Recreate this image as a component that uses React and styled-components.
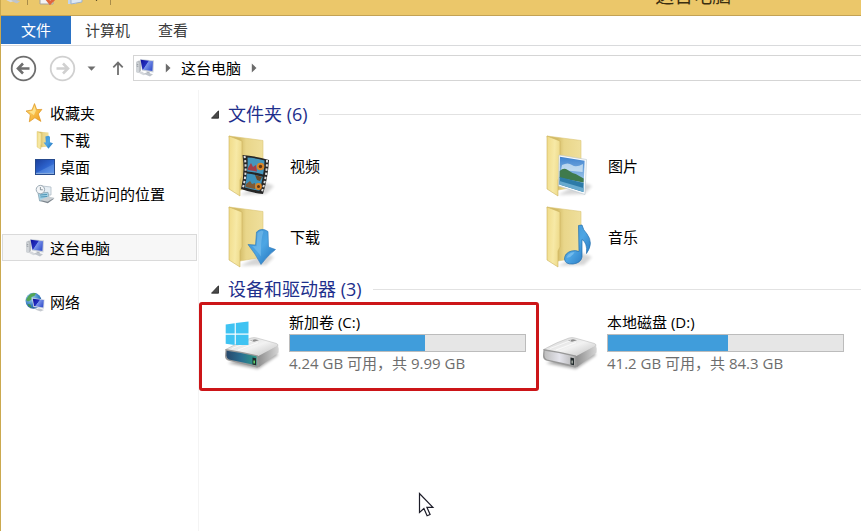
import React, { useState } from "react";
import styled, { createGlobalStyle } from "styled-components";

const GlobalStyle = createGlobalStyle`
  * {
    box-sizing: border-box;
  }
  body {
    margin: 0;
    background: #ffffff;
    font-family: "Open Sans", "Noto Sans CJK SC", sans-serif;
    font-size: 15px;
    line-height: 20px;
    color: #000000;
  }
  button {
    font: inherit;
    border: none;
    background: none;
    padding: 0;
    cursor: pointer;
  }
  h1, h2, p, ul {
    margin: 0;
    padding: 0;
    font-weight: 400;
  }
  svg {
    display: block;
    flex: none;
  }
`;

const Window = styled.div`
  position: relative;
  display: flex;
  flex-direction: column;
  min-height: 100vh;
  margin-right: 4px;
  border-left: 1px solid #cba94f;
  overflow: hidden;
`;

const TitleBar = styled.header`
  display: grid;
  grid-template-columns: 61% 39%;
  align-items: end;
  align-content: end;
  height: 16px;
  padding-bottom: 7px;
  background: #ebc76a;
  border-bottom: 1px solid #c3a254;
  overflow: hidden;
`;

const QuickAccess = styled.div`
  display: flex;
  align-items: flex-end;
  padding: 0 0 3px 1px;
`;

const QuickButton = styled.button`
  display: flex;
  justify-content: center;
  width: ${(props) => props.$width || 24}px;
`;

const Divider = styled.span`
  width: 1px;
  height: 16px;
  margin: 0 5px;
  background: #a98c48;
`;

const Title = styled.h1`
  font-size: 19px;
  line-height: 24px;
  text-align: center;
  color: #3a2e10;
`;

const Ribbon = styled.nav`
  display: flex;
  height: 30px;
  padding-bottom: 1px;
  border-bottom: 1px solid #d9dadc;
`;

const Tab = styled.button`
  padding: 0 ${(props) => (props.$file ? 20 : 14)}px;
  color: ${(props) => (props.$file ? "#ffffff" : "#3c3c3c")};
  background: ${(props) => (props.$file ? "#2b73c5" : "transparent")};
  line-height: 28px;
`;

const Toolbar = styled.div`
  display: flex;
  align-items: center;
  height: 44px;
  padding-left: 9px;
`;

const NavButton = styled.button`
  display: flex;
  justify-content: center;
  margin-right: ${(props) => props.$gap || 0}px;
`;

const AddressBar = styled.div`
  display: flex;
  flex: 1;
  align-items: center;
  gap: 10px;
  height: 26px;
  padding-left: 1px;
  border: 1px solid #d5d5d5;
  border-right: none;
`;

const Body = styled.div`
  display: flex;
  flex: 1;
`;

const Sidebar = styled.aside`
  flex: none;
  width: 198px;
  padding: 9px 1px 0;
  border-right: 1px solid #f4f4f4;
`;

const NavGroup = styled.ul`
  list-style: none;
  margin-bottom: 27px;
`;

const NavLink = styled.a`
  display: flex;
  align-items: center;
  gap: 5px;
  height: 27px;
  padding-left: ${(props) => (props.$nested ? 32 : 22)}px;
  color: #000000;
  text-decoration: none;
  background: ${(props) => (props.$active ? "#f7f7f7" : "transparent")};
  border: 1px solid ${(props) => (props.$active ? "#dadada" : "transparent")};
`;

const Main = styled.main`
  flex: 1;
  min-width: 0;
  padding-top: 10px;
`;

const Section = styled.section`
  margin-bottom: 3px;
`;

const SectionHeader = styled.div`
  display: flex;
  align-items: center;
  gap: 9px;
  height: 28px;
  margin-bottom: 2px;
  padding-left: 12px;
  &::after {
    content: "";
    flex: 1;
    height: 1px;
    margin-left: 2px;
    background: #e2e2e2;
  }
`;

const SectionTitle = styled.h2`
  font-size: 18px;
  line-height: 28px;
  color: #1e2f8c;
`;

const TileGrid = styled.div`
  display: grid;
  grid-template-columns: repeat(auto-fill, 318px);
  padding-left: 25px;
`;

const FolderTile = styled.a`
  display: flex;
  align-items: center;
  gap: 10px;
  height: 71px;
  color: #000000;
  text-decoration: none;
`;

const DriveTile = styled(FolderTile)`
  position: relative;
  gap: 9px;
  height: 74px;
`;

const Highlight = styled.span`
  position: absolute;
  top: -3px;
  right: 3px;
  bottom: -12px;
  left: -25px;
  border: 3px solid #cc1518;
  border-radius: 3px;
  pointer-events: none;
`;

const DriveInfo = styled.div`
  width: 237px;
`;

const Meter = styled.div`
  height: 18px;
  margin: 2px 0 1px;
  background: #e6e6e6;
  border: 1px solid #bcbcbc;
`;

const MeterFill = styled.div`
  height: 100%;
  background: #409ddb;
`;

const Space = styled.p`
  color: #6d6d6d;
  white-space: nowrap;
`;

const Pointer = styled.svg`
  position: absolute;
  top: 492px;
  left: 417px;
  pointer-events: none;
`;

// gradients shared by all the icons
const Gradients = () => (
  <svg width="0" height="0" style={{ position: "absolute" }} aria-hidden="true">
    <defs>
      <linearGradient id="front" x1="0" y1="0" x2="1" y2="0.2">
        <stop offset="0" stopColor="#f0db88" />
        <stop offset="0.6" stopColor="#f7e9a6" />
        <stop offset="1" stopColor="#eedb8c" />
      </linearGradient>
      <linearGradient id="back" x1="0" y1="0" x2="1" y2="0">
        <stop offset="0.3" stopColor="#d3bb66" />
        <stop offset="0.5" stopColor="#e9d68a" />
        <stop offset="1" stopColor="#efdf9c" />
      </linearGradient>
      <linearGradient id="blue" x1="0" y1="0" x2="1" y2="1">
        <stop offset="0" stopColor="#3d8fd0" />
        <stop offset="0.5" stopColor="#4da6e4" />
        <stop offset="1" stopColor="#1f6db8" />
      </linearGradient>
      <linearGradient id="sky" x1="0" y1="0" x2="0" y2="1">
        <stop offset="0" stopColor="#3f82cf" />
        <stop offset="1" stopColor="#c9e6f5" />
      </linearGradient>
      <linearGradient id="screen" x1="0" y1="0" x2="1" y2="0.6">
        <stop offset="0" stopColor="#10109a" />
        <stop offset="0.5" stopColor="#2430c0" />
        <stop offset="0.55" stopColor="#7c94ea" />
        <stop offset="1" stopColor="#3c58d0" />
      </linearGradient>
      <linearGradient id="desk" x1="0" y1="0" x2="1" y2="1">
        <stop offset="0" stopColor="#1b3f9c" />
        <stop offset="0.5" stopColor="#2c62cc" />
        <stop offset="1" stopColor="#5e96ea" />
      </linearGradient>
      <linearGradient id="metal" x1="0" y1="0" x2="1" y2="1">
        <stop offset="0" stopColor="#d0d0d0" />
        <stop offset="0.5" stopColor="#f2f2f2" />
        <stop offset="1" stopColor="#bcbcbc" />
      </linearGradient>
      <linearGradient id="side" x1="0" y1="0" x2="1" y2="0">
        <stop offset="0" stopColor="#8c8c8c" />
        <stop offset="1" stopColor="#d6d6d6" />
      </linearGradient>
      <linearGradient id="glow" x1="0" y1="0" x2="1" y2="0">
        <stop offset="0" stopColor="#27486b" />
        <stop offset="0.5" stopColor="#2a6f92" />
        <stop offset="1" stopColor="#2f9a86" />
      </linearGradient>
      <linearGradient id="face" x1="0" y1="0" x2="1" y2="0">
        <stop offset="0" stopColor="#bdbdbd" />
        <stop offset="0.5" stopColor="#e4e4ec" />
        <stop offset="1" stopColor="#b4b4b4" />
      </linearGradient>
      <radialGradient id="globe" cx="0.35" cy="0.3" r="0.8">
        <stop offset="0" stopColor="#a9d8f2" />
        <stop offset="0.6" stopColor="#3a80c4" />
        <stop offset="1" stopColor="#1b4b8e" />
      </radialGradient>
      <linearGradient id="gold" x1="0" y1="0" x2="1" y2="1">
        <stop offset="0" stopColor="#ffe27a" />
        <stop offset="1" stopColor="#f09a1a" />
      </linearGradient>
      <filter id="soft" x="-50%" y="-50%" width="200%" height="200%">
        <feGaussianBlur stdDeviation="1.5" />
      </filter>
    </defs>
  </svg>
);

const ComputerIcon = ({ size = 20 }) => (
  <svg width={size} height={size} viewBox="0 0 20 20">
    <path d="M1 4l3-1.5 2 .5v10l-2 2-3-1z" fill="#b9bdc2" />
    <path d="M1 4l3 .8V15l-3-1z" fill="#d0d4d8" />
    <path d="M1.600 6.200l1.700.4M1.600 8l1.700.4" stroke="#7d838a" strokeWidth=".7" />
    <path d="M5 1l14 1.500-.6 12L7 12.400z" fill="#c6cdd8" />
    <path d="M5.600 1.800l12.400 1.400-.6 9.800L7.400 11.400z" fill="url(#screen)" />
    <path d="M11.500 13.400l3 .5.4 2-3-.5z" fill="#aeb3ba" />
    <path d="M8 15.400l4-1 6 1.800-3 2.200z" fill="#bfc4cb" />
    <path d="M3 14.400l4-1 4 3-2.500.8z" fill="#d4d7db" />
  </svg>
);

const StarIcon = () => (
  <svg width="20" height="20" viewBox="0 0 20 20">
    <path
      d="M9.500.600l2.200 6 5.200-.2-3.600 4.600 2.600 7.400-6-3.600-5.600 4 1-7L1 8l6-1z"
      fill="url(#gold)"
      stroke="#dc9420"
      strokeWidth=".7"
    />
    <path d="M9.500 3l1.400 4.600-2 4.600-5-3.600 3.800-.8z" fill="#fff0a8" opacity=".7" />
  </svg>
);

const SmallDownloadIcon = () => (
  <svg width="20" height="20" viewBox="0 0 20 20">
    <path d="M2.500 1.500l11 1v14l-9 1z" fill="url(#back)" />
    <path d="M2 1.500l4.500 2V14l-.6 1v4.300L2 17z" fill="url(#front)" stroke="#dcc36a" strokeWidth=".4" />
    <path d="M10.400 6.600l3-.8 1.600 1v5.400l3 1-4.600 5.600-4.800-6.400 2.200.2z" fill="url(#blue)" />
  </svg>
);

const DesktopIcon = () => (
  <svg width="20" height="20" viewBox="0 0 20 20">
    <rect x=".5" y="2.500" width="19" height="15" fill="url(#desk)" stroke="#264a8c" />
    <path d="M1 16.400h18" stroke="#8fb0de" />
    <path d="M1 16l18-9v9z" fill="#7fb0f2" opacity=".3" />
  </svg>
);

const RecentIcon = () => (
  <svg width="20" height="20" viewBox="0 0 20 20">
    <path d="M7 2l9 1v8H6z" fill="#e6eef4" stroke="#b0bcc6" strokeWidth=".8" />
    <path d="M3 9l10-.6 1.400 7.200L4.600 17z" fill="#a4d2e6" stroke="#8ba6b4" strokeWidth=".8" />
    <path d="M5 11l7-.5M5.400 13l7-.5" stroke="#4c93b4" />
    <circle cx="5.400" cy="5.600" r="4.200" fill="#f4f6f8" stroke="#9caab4" />
    <path d="M5.400 3v2.800h2.400" fill="none" stroke="#6e7c88" strokeWidth=".8" />
    <path d="M5 17l8-3.600 6.400 1.200-6.600 4.600z" fill="#7c858d" />
    <path d="M5 16l8-3.400 6.400 1.200-6.800 4z" fill="#c9cfd3" />
  </svg>
);

const NetworkIcon = () => (
  <svg width="20" height="20" viewBox="0 0 20 20">
    <circle cx="8.500" cy="8.800" r="8" fill="url(#globe)" />
    <path d="M3 4.400c2-3 6-4 8-3.200L9.400 4 6.600 5l-.4 3L3 9.400 1 8z" fill="#52a555" />
    <path d="M2.400 12l3 .6 1.200 3.400C4.600 15.400 3 13.800 2.400 12z" fill="#3f9148" />
    <path d="M7 6l12.600 1.400-.6 9.400L8.400 15z" fill="#d6dce4" />
    <path d="M7.800 6.800L18.800 8l-.6 7.600L9 14z" fill="url(#screen)" />
    <path d="M10 17.600l4-1.400 5 1.800-3.400 1.600z" fill="#c6cad0" />
  </svg>
);

const FolderIcon = ({ children }) => (
  <svg width="56" height="64" viewBox="0 0 56 64">
    <path d="M16 61l26-1 8-8-10-4z" fill="#000000" opacity=".16" filter="url(#soft)" />
    <path d="M5 2l34 4.500V52l-23 4z" fill="url(#back)" stroke="#dcc678" strokeWidth=".6" />
    <path d="M5 2l13 5v35l-2 4v16L5 55z" fill="url(#front)" stroke="#cdb45e" strokeWidth=".6" />
    {children}
  </svg>
);

const VideoArt = () => (
  <>
    <path d="M18.500 21q13 1 26.500 5-1 18-6 34-11-1-22-5 4-16 1.500-34z" fill="#252525" />
    <path d="M20.500 21.800q3 17-2 33.500M43 26q0 17-5.500 33" fill="none" stroke="#dcdcdc" strokeWidth="2" strokeDasharray="2.400 1.800" />
    <path d="M23.500 23.500q9 .5 17 3 0 7-1.400 14-8-2.500-16-3 .8-7 .4-14z" fill="#4596bd" />
    <path d="M22.800 39.600q8 .8 16 3.200-1.200 7-3.400 14-7-1-14.600-3.400 1.600-7 2-13.800z" fill="#3d92bb" />
    <path d="M24 34l3-5 2 4 3-2 1 6.500-9-1.500z" fill="#a43e48" />
    <circle cx="36.500" cy="32.500" r="3.800" fill="#d98528" />
    <circle cx="36.500" cy="32.500" r="1.700" fill="#5b3517" />
    <path d="M31 41l7 2-2 4-3-1z" fill="#6b4a2a" />
    <path d="M22 50l4-3 2 3 3-1v6l-9.500-2z" fill="#7e5b38" />
    <circle cx="34.500" cy="52.500" r="3.400" fill="#d98528" />
    <circle cx="34.500" cy="52.500" r="1.500" fill="#5b3517" />
  </>
);

const PictureArt = () => (
  <>
    <path d="M17 21l27.500 4.500L43 60.500 16.500 52z" fill="#f8fafb" stroke="#b8c4cc" strokeWidth=".6" />
    <path d="M18 22.800l24.600 4-1.200 31.200-24-7.400z" fill="url(#sky)" />
    <path d="M20 31q6-3 10 0t11-1l-.4 8-21.600-2z" fill="#e8f4fb" opacity=".65" />
    <path d="M17.700 37q4-4 8-1t8 4l8 4.500-.1 4-24-4.500z" fill="#3f7a4c" />
    <path d="M17.600 43l24 6-.2 9-24-7.400z" fill="#2d7ba8" />
    <path d="M17.500 47l24 7-.1 4-24-7.400z" fill="#68aace" />
  </>
);

const DownloadArt = () => (
  <>
    <path
      d="M32.500 27q5-5 11.500-.5l.5 15.500 7 2.500Q43 51 37 59.500 31 48 24 39.500l7.500.5z"
      fill="url(#blue)"
      stroke="#2b77b8"
      strokeWidth=".6"
    />
    <path d="M33.500 28q4-3.500 6-1.500-3 8-2.500 25-4-6-9-10.500l4.500.2z" fill="#8ccaf2" opacity=".45" />
  </>
);

const MusicArt = () => (
  <>
    <path
      d="M36.500 20.500l3.500-.5q1 5 5 9 7 9-.5 19.500 1-11-4.500-14V52q-1 6-9 7-8 .5-8.500-5 0-6 7-8 4-1 7.500.5z"
      fill="url(#blue)"
      stroke="#226eae"
      strokeWidth=".7"
    />
    <path d="M24.500 53q1-5 8-6-2 5-8 6z" fill="#9ad2f5" opacity=".5" />
  </>
);

const DriveIcon = ({ system }) => (
  <svg width="56" height="64" viewBox="0 0 56 64">
    <path d="M4 53l30 6 20-14-4-6z" fill="#000000" opacity=".35" filter="url(#soft)" />
    <path d="M1.500 39.500Q15 32 27 28q3-.8 6 0l19.500 5.500q2.500 1 1 3L34 47.500z" fill="url(#metal)" stroke="#b3b3b3" strokeWidth=".5" />
    <path d="M33.500 46.500L54 35.500q1.200 3 .5 7L35 57z" fill="url(#side)" />
    <path d="M1.500 39q16 2.500 32.500 6.500l1 11q-1 1.200-3 .8L4 50.500Q1 49 1 46z" fill="#989898" />
    <path
      d="M2.600 40.800q15 2 30 5.600v9L5 49.400q-2.400-1-2.600-3.800z"
      fill={system ? "url(#glow)" : "url(#face)"}
    />
    <path d="M28.500 47.500l3.500.8v7l-3.500-.8z" fill="#20282a" />
    <path d="M29.500 50.500h1.300v3h-1.300z" fill={system ? "#6cff7a" : "#b7bdb4"} />
    <path d="M26 30.500l5-1.300 4 1-5 1.600z" fill="#8b8b8b" />
    <path d="M8 38.500l21-8M14 40l20-7.500" stroke="#ffffff" opacity=".7" />
    {system && (
      <g fill="#3fc3f2">
        <path d="M1.700 14.400l9-1.200v10.400h-9z" />
        <path d="M11.800 13L24.500 11.400v12.200H11.800z" />
        <path d="M1.700 24.700h9V35l-9-1.300z" />
        <path d="M11.800 24.700h12.700V35H11.800z" />
      </g>
    )}
  </svg>
);

const RoundArrow = ({ color, flip }) => (
  <svg width="27" height="27" viewBox="0 0 27 27">
    <circle cx="13.500" cy="13.500" r="11.800" fill="none" stroke={color} strokeWidth="1.800" />
    <path
      d={flip ? "M7.500 13.500h11M14 8.500l5 5-5 5" : "M19.500 13.500h-11M13 8.500l-5 5 5 5"}
      fill="none"
      stroke={color}
      strokeWidth="2.600"
    />
  </svg>
);

const Chevron = () => (
  <svg width="6" height="10" viewBox="0 0 6 10">
    <path d="M.8.600L5.500 5 .8 9.400z" fill="#6b6b6b" />
  </svg>
);

const Collapse = () => (
  <svg width="8" height="9" viewBox="0 0 8 9">
    <path d="M7.500.8v7.400H.5z" fill="#4a4a4a" stroke="#222222" strokeWidth=".8" />
  </svg>
);

const favorites = [
  { name: "收藏夹", icon: <StarIcon /> },
  { name: "下载", icon: <SmallDownloadIcon />, nested: true },
  { name: "桌面", icon: <DesktopIcon />, nested: true },
  { name: "最近访问的位置", icon: <RecentIcon />, nested: true },
];

const places = [
  [{ name: "这台电脑", icon: <ComputerIcon /> }],
  [{ name: "网络", icon: <NetworkIcon /> }],
];

const folders = [
  { name: "视频", art: <VideoArt /> },
  { name: "图片", art: <PictureArt /> },
  { name: "下载", art: <DownloadArt /> },
  { name: "音乐", art: <MusicArt /> },
];

const drives = [
  { name: "新加卷 (C:)", free: 4.24, total: 9.99, system: true },
  { name: "本地磁盘 (D:)", free: 41.2, total: 84.3 },
];

const App = () => {
  const [selected, setSelected] = useState("这台电脑");

  return (
    <>
      <GlobalStyle />
      <Gradients />
      <Window>
        <TitleBar>
          <QuickAccess>
            <ComputerIcon />
            <Divider />
            <QuickButton $width={30} aria-label="属性">
              <svg width="18" height="20" viewBox="0 0 18 20">
                <path d="M1 0h13v19H1z" fill="#f3f3f3" stroke="#a5a29c" />
                <path d="M7 13l4 5 6-6" fill="none" stroke="#e0643c" strokeWidth="3" />
              </svg>
            </QuickButton>
            <QuickButton aria-label="新建文件夹">
              <svg width="16" height="20" viewBox="0 0 16 20">
                <path d="M1 0h8v19H1z" fill="#c4d5ea" />
                <path d="M4 0h11v17l-11 2z" fill="#dde8f5" stroke="#9fb2c8" />
              </svg>
            </QuickButton>
            <QuickButton $width={18} aria-label="自定义">
              <svg width="7" height="10" viewBox="0 0 7 10">
                <path d="M0 2h7L3.500 6z" fill="#2e2610" />
              </svg>
            </QuickButton>
            <Divider />
          </QuickAccess>
          <Title>这台电脑</Title>
        </TitleBar>

        <Ribbon>
          <Tab $file>文件</Tab>
          <Tab>计算机</Tab>
          <Tab>查看</Tab>
        </Ribbon>

        <Toolbar>
          <NavButton $gap={12} aria-label="后退">
            <RoundArrow color="#6e6e6e" />
          </NavButton>
          <NavButton $gap={11} aria-label="前进">
            <RoundArrow color="#d0d0d0" flip />
          </NavButton>
          <NavButton $gap={16} aria-label="历史">
            <svg width="9" height="5" viewBox="0 0 9 5">
              <path d="M.5.500h8L4.500 4.800z" fill="#6e6e6e" />
            </svg>
          </NavButton>
          <NavButton $gap={9} aria-label="向上">
            <svg width="12" height="14" viewBox="0 0 12 14">
              <path d="M6 14V2M1.300 6.300L6 1.600l4.700 4.700" fill="none" stroke="#707070" strokeWidth="1.800" />
            </svg>
          </NavButton>
          <AddressBar>
            <ComputerIcon />
            <Chevron />
            <button>这台电脑</button>
            <Chevron />
          </AddressBar>
        </Toolbar>

        <Body>
          <Sidebar>
            {[favorites, ...places].map((group) => (
              <NavGroup key={group[0].name}>
                {group.map((item) => (
                  <li key={item.name}>
                    <NavLink
                      href="#"
                      $nested={item.nested}
                      $active={selected === item.name}
                      onClick={() => setSelected(item.name)}
                    >
                      {item.icon}
                      {item.name}
                    </NavLink>
                  </li>
                ))}
              </NavGroup>
            ))}
          </Sidebar>

          <Main>
            <Section>
              <SectionHeader>
                <Collapse />
                <SectionTitle>文件夹 (6)</SectionTitle>
              </SectionHeader>
              <TileGrid>
                {folders.map((folder) => (
                  <FolderTile href="#" key={folder.name}>
                    <FolderIcon>{folder.art}</FolderIcon>
                    {folder.name}
                  </FolderTile>
                ))}
              </TileGrid>
            </Section>

            <Section>
              <SectionHeader>
                <Collapse />
                <SectionTitle>设备和驱动器 (3)</SectionTitle>
              </SectionHeader>
              <TileGrid>
                {drives.map((drive) => (
                  <DriveTile href="#" key={drive.name}>
                    <DriveIcon system={drive.system} />
                    <DriveInfo>
                      <p>{drive.name}</p>
                      <Meter>
                        <MeterFill
                          style={{ width: `${(1 - drive.free / drive.total) * 100}%` }}
                        />
                      </Meter>
                      <Space>
                        {drive.free} GB 可用，共 {drive.total} GB
                      </Space>
                    </DriveInfo>
                    {drive.system && <Highlight />}
                  </DriveTile>
                ))}
              </TileGrid>
            </Section>
          </Main>
        </Body>

        <Pointer width="18" height="26" viewBox="0 0 18 26">
          <path
            d="M1.500 1.500v19l4.400-4 3.200 7.300 3-1.300-3.200-7.200h6z"
            fill="#ffffff"
            stroke="#1c1c28"
            strokeWidth="1.200"
          />
        </Pointer>
      </Window>
    </>
  );
};

export default App;
